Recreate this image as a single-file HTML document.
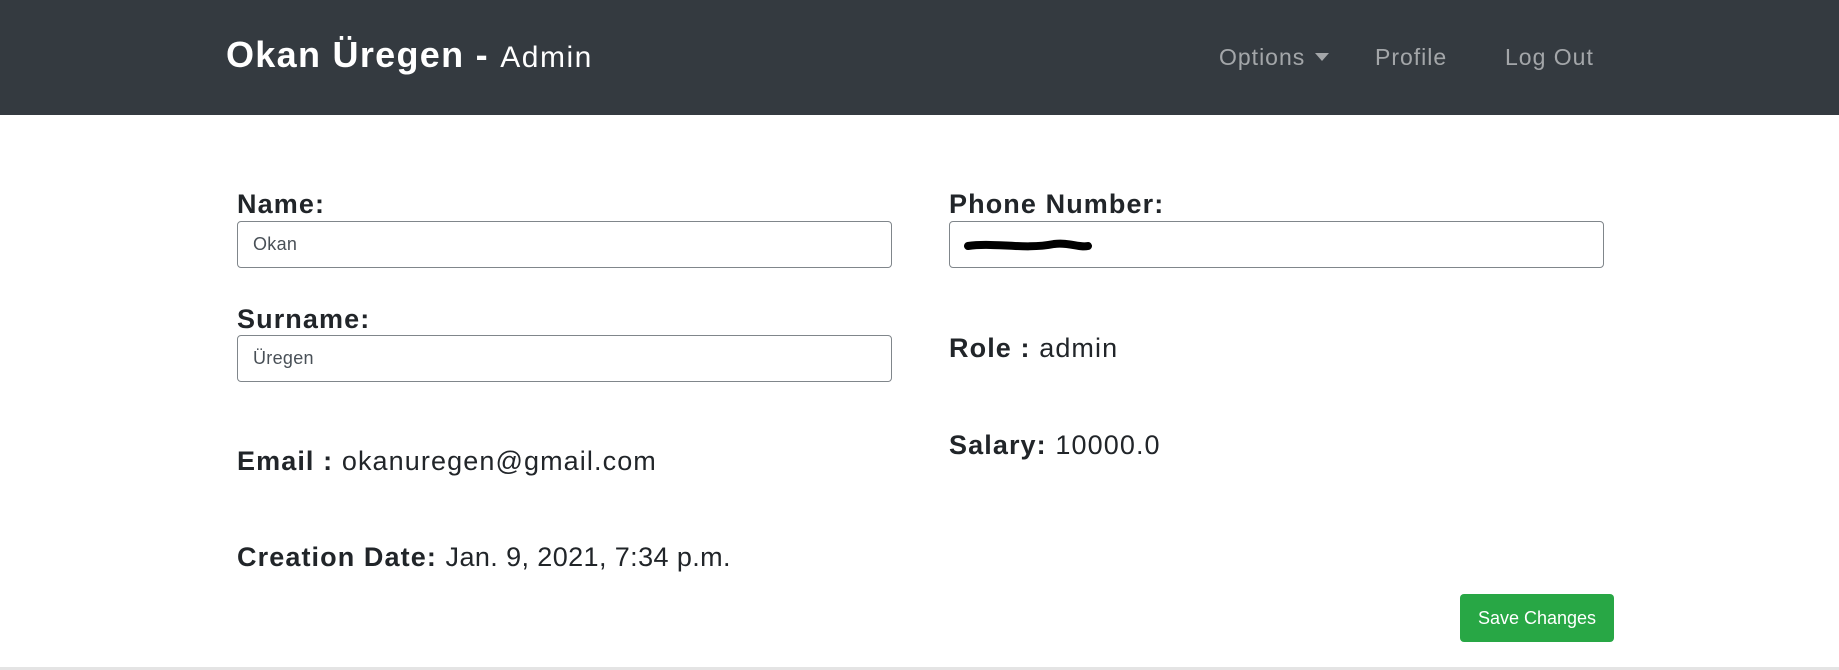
<!DOCTYPE html>
<html><head><meta charset="utf-8"><style>
*{box-sizing:border-box;margin:0;padding:0}
body{width:1839px;height:670px;background:#fff;font-family:"Liberation Sans",sans-serif;color:#212529;position:relative;overflow:hidden}
.nav{position:absolute;left:0;top:0;width:1839px;height:115px;background:#343a40}
.brand{position:absolute;left:226px;top:34px;color:#fff;font-size:36px;font-weight:bold;white-space:nowrap;letter-spacing:1.3px}
.brand span{font-size:30px;font-weight:normal;letter-spacing:1.5px}
.nl{position:absolute;top:44px;color:rgba(255,255,255,.55);font-size:23px;white-space:nowrap;letter-spacing:1px}
.caret{display:inline-block;width:0;height:0;border-left:7px solid transparent;border-right:7px solid transparent;border-top:8px solid rgba(255,255,255,.55);vertical-align:middle;margin-left:10px;margin-top:-4px}
.lbl{position:absolute;font-size:27px;font-weight:bold;white-space:nowrap;letter-spacing:1.1px}
.lbl span{font-weight:normal;letter-spacing:1.1px}
.inp{position:absolute;height:47px;border:1px solid #80868b;border-radius:4px;font-size:18px;color:#495057;padding-left:15px;line-height:45px;letter-spacing:0.3px}
.btn{position:absolute;left:1460px;top:594px;width:154px;height:48px;background:#28a745;border-radius:4px;color:#fff;font-size:18px;text-align:center;line-height:48px}
.bot{position:absolute;left:0;top:667px;width:1839px;height:3px;background:#e4e4e4}
</style></head><body>
<div class="nav">
<div class="brand">Okan Üregen - <span>Admin</span></div>
<div class="nl" style="left:1219px">Options<span class="caret"></span></div>
<div class="nl" style="left:1375px">Profile</div>
<div class="nl" style="left:1505px">Log Out</div>
</div>
<div class="lbl" style="left:237px;top:189px">Name:</div>
<div class="inp" style="left:237px;top:221px;width:655px">Okan</div>
<div class="lbl" style="left:237px;top:304px">Surname:</div>
<div class="inp" style="left:237px;top:335px;width:655px">Üregen</div>
<div class="lbl" style="left:237px;top:446px">Email : <span>okanuregen@gmail.com</span></div>
<div class="lbl" style="left:237px;top:542px">Creation Date: <span style="letter-spacing:0.4px">Jan. 9, 2021, 7:34 p.m.</span></div>
<div class="lbl" style="left:949px;top:189px">Phone Number:</div>
<div class="inp" style="left:949px;top:221px;width:655px"><svg width="130" height="20" style="position:absolute;left:14px;top:14px"><path d="M4 10 C30 6 60 14 90 8 C105 6 115 12 124 10" stroke="#000" stroke-width="8" fill="none" stroke-linecap="round"/></svg></div>
<div class="lbl" style="left:949px;top:333px">Role : <span>admin</span></div>
<div class="lbl" style="left:949px;top:430px">Salary: <span>10000.0</span></div>
<div class="btn">Save Changes</div>
<div class="bot"></div>
</body></html>
